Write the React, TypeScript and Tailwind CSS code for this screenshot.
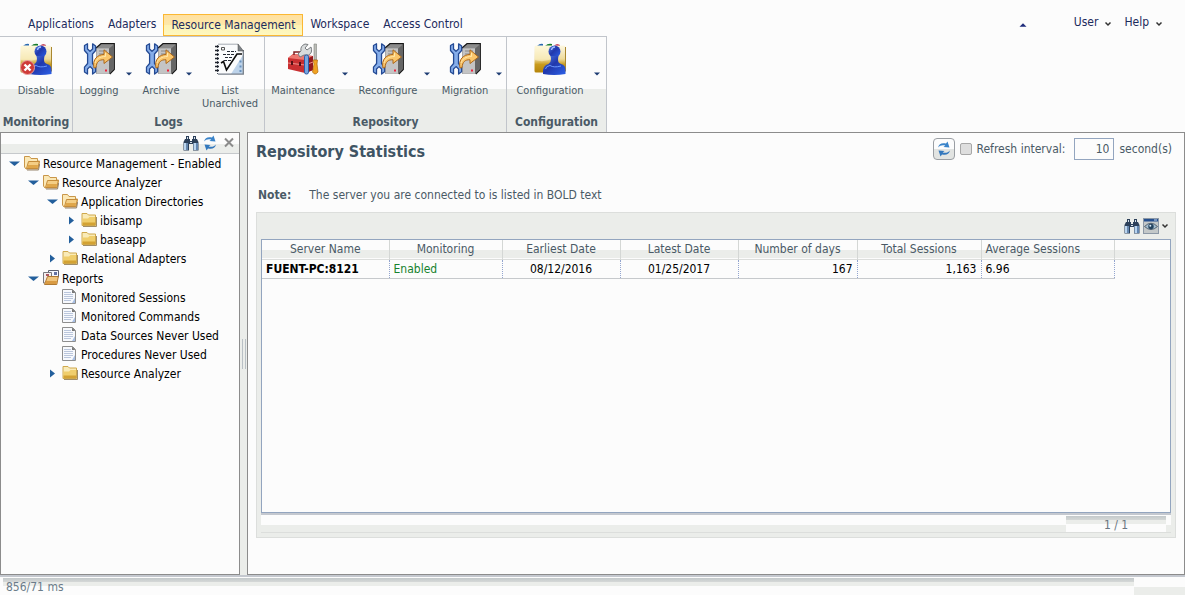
import type { ReactNode } from "react";

type IconProps = { className?: string };

function Wrench() {
  return (
    <path
      d="M1.5 2.5L4.5 0.8V6L7 8.2L9.6 6V0.8L12.6 3V7.5L9.5 11V20.5L12.6 24V28.8L9.6 31V26L7 23.6L4.5 26V31L1.5 29V24.2L4.6 20.5V11L1.5 7.5Z"
      fill="#86aeea"
      stroke="#244a94"
      strokeWidth="1.3"
      strokeLinejoin="round"
    />
  );
}

function ServerIcon({ className }: IconProps) {
  return (
    <svg className={className} viewBox="0 0 32 32">
      <path d="M13 5L18 .8H31.2V26.5L26.5 31H13Z" fill="#a9a9a9" />
      <path d="M13.5 5.5L18 1.5H30L26 5.5Z" fill="#8b8b8b" />
      <path d="M14 5.5H26V30.5H14Z" fill="#c4c4c4" />
      <path d="M26 5.5L30.5 1.5V26L26 30.5Z" fill="#666" />
      <path d="M16 8H24M16 11H24" stroke="#888" />
      <path d="M13 5L18 .7H31.3V26.5L26.8 31" fill="none" stroke="#171717" strokeWidth="1.2" />
      <Wrench />
      <path
        d="M11 25C9 16 15 11.5 21 11.5V6.8L29.5 14L21 20.5V16.8C16 16.5 13.5 19 13 24.5Z"
        fill="#fac66b"
        stroke="#ad681b"
        strokeLinejoin="round"
      />
      <path d="M12 20C13 16 17 13.5 22.5 13.5V10" fill="none" stroke="#ffe8ab" />
      <path d="M22 26.5H24V28.5H22Z" fill="#f0203c" />
    </svg>
  );
}

function UserFolderIcon({ className }: IconProps) {
  return (
    <svg className={className} viewBox="0 0 32 32">
      <defs>
        <linearGradient id="folder-gold" x1="0" y1="0" x2="0" y2="1">
          <stop offset="0" stopColor="#fdf8e4" />
          <stop offset=".5" stopColor="#eedb9c" />
          <stop offset=".7" stopColor="#c99b1e" />
          <stop offset="1" stopColor="#b58409" />
        </linearGradient>
        <linearGradient id="user-blue" x1="0" y1="0" x2="1" y2="1">
          <stop offset="0" stopColor="#4f7ce8" />
          <stop offset=".45" stopColor="#2138ac" />
          <stop offset="1" stopColor="#2c61e8" />
        </linearGradient>
      </defs>
      <path d="M3 3Q6 0 9 1V3Z" fill="#2969b0" />
      <path d="M11 3Q14 0 18 1V3Z" fill="#177b2b" />
      <path d="M20 3Q22 0 26 2V3Z" fill="#b30d2f" />
      <rect x=".5" y="2.5" width="31" height="27" rx="1.5" fill="url(#folder-gold)" />
      <path d="M1 17Q10 20 20 15V3Q28 3 31 4V3H1Z" fill="#fff7d2" opacity=".5" />
      <path d="M31.5 4V28H24" fill="none" stroke="#a9872f" />
      <circle cx="20.5" cy="8.5" r="6" fill="url(#user-blue)" />
      <path
        d="M16.5 13H24.5C23.5 18 24 20 27 21Q31.5 22 31.5 27V31Q20 33 9 31V27Q10 22 14.5 21Q18 19 16.5 13Z"
        fill="url(#user-blue)"
      />
      <path d="M17.5 7Q18 4 21 4" fill="none" stroke="#a6c1ff" strokeWidth="1.3" />
      <path d="M11.5 26Q12 23 16 22.5Q20 25 27 23" fill="none" stroke="#6b98ff" />
    </svg>
  );
}

function DisableIcon({ className }: IconProps) {
  return (
    <span className="relative block">
      <UserFolderIcon className={className} />
      <svg className="absolute bottom-0 left-0 size-4" viewBox="0 0 16 16">
        <circle cx="7.5" cy="8.5" r="7" fill="#cf3b38" stroke="#e9a09c" />
        <path d="M4.5 5.5L10.5 11.5M10.5 5.5L4.5 11.5" stroke="#fff" strokeWidth="2.4" />
      </svg>
    </span>
  );
}

function NotebookIcon({ className }: IconProps) {
  return (
    <svg className={className} viewBox="0 0 32 32">
      <path d="M4 1.5H24L29 7V31H4Z" fill="#fafbfc" />
      <path d="M17 31L29 12V31Z" fill="#bdd3ea" />
      <path d="M4 31.2H29.3V7" fill="none" stroke="#777f89" strokeWidth="1.3" />
      <path d="M4 1.2H24" stroke="#a4aab3" />
      <path d="M24 1L29.5 8H24Z" fill="#7c8187" stroke="#444" strokeWidth=".5" />
      <path d="M3.5 2V31" stroke="#4d5561" strokeDasharray="1 1" />
      <path d="M1 3.5H5M1 7.5H5M1 11.5H5M1 15.5H5M1 19.5H5M1 23.5H5M1 27.5H5" stroke="#20242d" strokeWidth="1.6" />
      <path d="M7.5 4.5H10.5V7H7.5Z" fill="none" stroke="#555" />
      <path d="M13 8.5H22M9 11.5H20M11 14.5H18M10 17.5H17" stroke="#252b35" strokeDasharray="3 1" />
      <path d="M7 20L9.5 18.5L12.5 27L23 11H28" fill="none" stroke="#0d0d0d" strokeWidth="1.6" />
      <path d="M25.5 17.5H27.5V19.5H25.5ZM25.5 22.5H27.5V24.5H25.5ZM25.5 27H27.5V29H25.5Z" fill="#6891bd" />
    </svg>
  );
}

function ToolboxIcon({ className }: IconProps) {
  return (
    <svg className={className} viewBox="0 0 32 32">
      <path d="M1 15L6 11L26 13V27L18 30L1 26Z" fill="#c92f31" />
      <path d="M1 15L6 11L26 13L18 17Z" fill="#ed7770" />
      <path d="M18 17L26 13V27L18 30.5Z" fill="#94191f" />
      <path d="M1 20L18 22L26 19" fill="none" stroke="#f0918b" />
      <path d="M4 18H6V22H4ZM12 19H14V23H12Z" fill="#551216" />
      <path d="M7 12V9H14V12" fill="none" stroke="#7e2023" strokeWidth="1.5" />
      <path
        d="M11 11L14 8Q13 3 18 1L21 1.5L18 5L20 7L24 4Q26 10 21.5 12L17 12L13 14Z"
        fill="#d8dbdc"
        stroke="#797d80"
      />
      <rect x="17.5" y="12" width="4" height="19" rx="1.8" fill="#78a6df" stroke="#2b5da9" />
      <path d="M27 1H29.5V17H27Z" fill="#bbbcb7" stroke="#81837e" strokeWidth=".6" />
      <path d="M26 17H30.5L30 21L31 29Q28 33 25.5 29L27 21Z" fill="#f1a321" stroke="#af6b10" strokeWidth=".7" />
    </svg>
  );
}

function BinocularsIcon({ className }: IconProps) {
  return (
    <svg className={className} viewBox="0 0 16 16">
      <path d="M3 1H6V4H7V6H9V4H10V1H13V4H14L15.5 7V15.5H10V9H6V15.5H.5V7L2 4H3Z" fill="#2c405a" />
      <path d="M1 8H3.5V15H1ZM10.5 8H13V15H10.5Z" fill="#b9d4ef" />
      <path d="M3.5 8H5V15H3.5ZM13 8H15V15H13Z" fill="#6286b1" />
      <path d="M4 2H5V4H4ZM11 2H12V4H11ZM7 7H9V8H7Z" fill="#d8e2ec" />
    </svg>
  );
}

function RefreshIcon({ className }: IconProps) {
  return (
    <svg className={className} viewBox="0 0 16 16">
      <path d="M2 6.5C3 2.5 6 1.5 10 2.5L11.5 .5L13.5 6.5L7.5 6L9.3 4.5C6 3.6 4 4.5 2 6.5Z" fill="#3983c9" />
      <path d="M14 9.5C13 13.5 10 14.5 6 13.5L4.5 15.5L2.5 9.5L8.5 10L6.7 11.5C10 12.4 12 11.5 14 9.5Z" fill="#3378bd" />
    </svg>
  );
}

function EyeIcon({ className }: IconProps) {
  return (
    <svg className={className} viewBox="0 0 16 16">
      <rect x=".5" y=".5" width="15" height="15" fill="#c3c8c9" stroke="#8c98a6" />
      <path d="M1 1H15V3.5H1Z" fill="#254f8e" />
      <path d="M11 1.5H14V2.5H11Z" fill="#c6d8ef" />
      <path d="M1.5 8.5Q8 2 14.5 8.5Q8 14.5 1.5 8.5Z" fill="#a3bed1" stroke="#56636f" />
      <circle cx="8" cy="8.5" r="2.7" fill="#24445f" />
      <circle cx="7.3" cy="7.8" r="1" fill="#dcebf7" />
    </svg>
  );
}

function FolderIcon({ className }: IconProps) {
  return (
    <svg className={className} viewBox="0 0 16 16">
      <path d="M1 1.5H6L7.5 3H14.5V13.5H1Z" fill="#f9ebb8" stroke="#cfa84c" />
      <path d="M1.5 6.5H7L8.5 5H14V13H1.5Z" fill="#f0ce6c" />
      <path d="M1.5 10.5H14V13H1.5Z" fill="#d3a233" />
      <path d="M2 14.5H15.5V5" fill="none" stroke="#a08d68" />
    </svg>
  );
}

function OpenFolderIcon({ className }: IconProps) {
  return (
    <svg className={className} viewBox="0 0 16 16">
      <path d="M.5 1.5H5.5L7 3.5H13.5V6H15.5L14 14H2L.5 12Z" fill="#fbe8b6" stroke="#c9974a" />
      <path d="M4.5 6.5H15.3L13.8 13.5H2.5Z" fill="#f4ce85" stroke="#c58c3b" />
      <path d="M4 10H14L13.5 13H3.2Z" fill="#dfa64a" />
      <path d="M3 15H14.5L15.7 9" fill="none" stroke="#95836d" />
    </svg>
  );
}

function ReportsIcon({ className }: IconProps) {
  return (
    <svg className={className} viewBox="0 0 16 16">
      <path d="M5.5.5H15.5V7H5.5Z" fill="#f4f8ff" stroke="#5c6070" />
      <path d="M11 2H14V5H11Z" fill="#6372a3" />
      <path d="M.5 2.5H8.5V13H.5Z" fill="#f5eeee" stroke="#77787e" />
      <path d="M3 4H6V6H3Z" fill="#ad5761" />
      <path d="M4.5 6.5H15.3L13.8 14.5H1.5Z" fill="#f0c57d" stroke="#b07a33" />
      <path d="M3 11H14L13.5 14H2.2Z" fill="#d99b43" />
    </svg>
  );
}

function DocumentIcon({ className }: IconProps) {
  return (
    <svg className={className} viewBox="0 0 16 16">
      <path d="M.5.5H10.5L13.5 3.5V14.5H.5Z" fill="#f7f9fd" stroke="#8e8e8e" />
      <path d="M2 3.5H9M2 5.5H11M2 7.5H11M2 9.5H11M2 11.5H9" stroke="#bac6dc" />
      <path d="M10 .5L13.5 4H10Z" fill="#777" />
      <path d="M10 14L13 9V14Z" fill="#a8bfe3" />
    </svg>
  );
}

function CaretDown({ className }: IconProps) {
  return (
    <svg className={className} viewBox="0 0 8 8">
      <path d="M1 2.5H7L4 5.5Z" fill="#1d3c72" />
    </svg>
  );
}

function Chevron({ className }: IconProps) {
  return (
    <svg className={className} viewBox="0 0 8 8">
      <path d="M1.5 2.5L4 5L6.5 2.5" fill="none" stroke="#333" strokeWidth="1.5" />
    </svg>
  );
}

const tabs = ["Applications", "Adapters", "Resource Management", "Workspace", "Access Control"];

type Tool = { label: string; icon: (props: IconProps) => ReactNode; width: string; menu: boolean };

const groups: { title: string; width: string; tools: Tool[] }[] = [
  {
    title: "Monitoring",
    width: "w-[73px]",
    tools: [{ label: "Disable", icon: DisableIcon, width: "w-[72px]", menu: false }],
  },
  {
    title: "Logs",
    width: "w-48",
    tools: [
      { label: "Logging", icon: ServerIcon, width: "w-[52px]", menu: true },
      { label: "Archive", icon: ServerIcon, width: "w-12", menu: true },
      { label: "List Unarchived", icon: NotebookIcon, width: "w-[66px]", menu: false },
    ],
  },
  {
    title: "Repository",
    width: "w-[242px]",
    tools: [
      { label: "Maintenance", icon: ToolboxIcon, width: "w-[76px]", menu: true },
      { label: "Reconfigure", icon: ServerIcon, width: "w-[70px]", menu: true },
      { label: "Migration", icon: ServerIcon, width: "w-[60px]", menu: true },
    ],
  },
  {
    title: "Configuration",
    width: "w-[100px]",
    tools: [{ label: "Configuration", icon: UserFolderIcon, width: "w-[86px]", menu: true }],
  },
];

type TreeNode = {
  label: string;
  indent: string;
  state: "open" | "closed" | "leaf";
  icon: (props: IconProps) => ReactNode;
};

const tree: TreeNode[] = [
  { label: "Resource Management - Enabled", indent: "pl-2", state: "open", icon: OpenFolderIcon },
  { label: "Resource Analyzer", indent: "pl-[27px]", state: "open", icon: OpenFolderIcon },
  { label: "Application Directories", indent: "pl-[46px]", state: "open", icon: OpenFolderIcon },
  { label: "ibisamp", indent: "pl-[65px]", state: "closed", icon: FolderIcon },
  { label: "baseapp", indent: "pl-[65px]", state: "closed", icon: FolderIcon },
  { label: "Relational Adapters", indent: "pl-[46px]", state: "closed", icon: FolderIcon },
  { label: "Reports", indent: "pl-[27px] pt-px", state: "open", icon: ReportsIcon },
  { label: "Monitored Sessions", indent: "pl-[46px]", state: "leaf", icon: DocumentIcon },
  { label: "Monitored Commands", indent: "pl-[46px]", state: "leaf", icon: DocumentIcon },
  { label: "Data Sources Never Used", indent: "pl-[46px]", state: "leaf", icon: DocumentIcon },
  { label: "Procedures Never Used", indent: "pl-[46px]", state: "leaf", icon: DocumentIcon },
  { label: "Resource Analyzer", indent: "pl-[46px]", state: "closed", icon: FolderIcon },
];

const columns = [
  { title: "Server Name", value: "FUENT-PC:8121", width: "w-[127px]", head: "text-center", cell: "text-left font-bold" },
  { title: "Monitoring", value: "Enabled", width: "w-[113px]", head: "text-center", cell: "text-left text-[#16822d]" },
  { title: "Earliest Date", value: "08/12/2016", width: "w-[118px]", head: "text-center", cell: "text-center" },
  { title: "Latest Date", value: "01/25/2017", width: "w-[118px]", head: "text-center", cell: "text-center" },
  { title: "Number of days", value: "167", width: "w-[119px]", head: "text-center", cell: "text-right" },
  { title: "Total Sessions", value: "1,163", width: "w-[124px]", head: "text-center", cell: "text-right" },
  { title: "Average Sessions", value: "6.96", width: "w-[133px]", head: "text-left", cell: "text-left" },
];

function MenuBar() {
  return (
    <header className="flex h-9 items-start justify-between pt-3.5 pr-[22px] pl-[21px] text-[#1c2b5c]">
      <nav className="flex h-[22px]">
        {tabs.map((tab) => (
          <button
            key={tab}
            className={
              tab === "Resource Management"
                ? "border border-[#fbb833] bg-[linear-gradient(#ffe0a0_0%,#fde8a9_50%,#fdf3b4_50%,#fef8c0_100%)] px-[7px]"
                : "px-[7px] pb-0.5"
            }
          >
            {tab}
          </button>
        ))}
      </nav>
      <div className="flex items-center">
        <button aria-label="Collapse ribbon" className="mt-1.5 mr-[47px]">
          <svg className="size-2" viewBox="0 0 8 8">
            <path d="M.5 5.8L4 2.2L7.5 5.8Z" fill="#1f2c7c" />
          </svg>
        </button>
        <button className="mr-3 flex items-center gap-1.5">
          User <Chevron className="mt-1 size-2" />
        </button>
        <button className="flex items-center gap-1.5">
          Help <Chevron className="mt-1 size-2" />
        </button>
      </div>
    </header>
  );
}

function Ribbon() {
  return (
    <div className="flex h-24 text-[#4a5a66]">
      {groups.map((group) => (
        <section
          key={group.title}
          className={`${group.width} flex flex-col border-t border-r border-[#c1c5cb] bg-[linear-gradient(#fcfcfc_52px,#ebedea_52px)]`}
        >
          <div className="flex flex-1 gap-1 pt-1.5">
            {group.tools.map((tool) => (
              <div key={tool.label} className="flex shrink-0">
                <button className={`${tool.width} flex flex-col items-center text-[11px] leading-[13px]`}>
                  <tool.icon className="size-8" />
                  <span className="mt-[9px] text-center">{tool.label}</span>
                </button>
                {tool.menu && (
                  <button aria-label={`${tool.label} menu`} className="h-9 pt-[26px]">
                    <CaretDown className="size-2" />
                  </button>
                )}
              </div>
            ))}
          </div>
          <h2 className="pb-0.5 text-center font-bold">{group.title}</h2>
        </section>
      ))}
    </div>
  );
}

function Sidebar() {
  return (
    <aside className="w-60 shrink-0 border border-[#8c8c8c] bg-[#fcfcfc]">
      <div className="flex h-[21px] items-center justify-end gap-[3px] border-b border-[#c6c9cc] bg-[linear-gradient(#fcfcfc_11px,#ebedea_11px)] pr-0.5">
        <button aria-label="Find">
          <BinocularsIcon className="size-4" />
        </button>
        <button aria-label="Refresh">
          <RefreshIcon className="size-4" />
        </button>
        <button aria-label="Close">
          <svg className="size-4" viewBox="0 0 16 16">
            <path d="M4 3.5L12 11.5M12 3.5L4 11.5" stroke="#8b8b8b" strokeWidth="2" />
          </svg>
        </button>
      </div>
      <ul>
        {tree.map((node, i) => (
          <li key={i} className={`${node.indent} flex items-center whitespace-nowrap text-black`}>
            <svg className="mr-1 size-[11px]" viewBox="0 0 11 11">
              {node.state === "open" && <path d="M0 3.5H11L5.5 8Z" fill="#235f9c" />}
              {node.state === "closed" && <path d="M3 1.5L8 5.5L3 9.5Z" fill="#235f9c" />}
            </svg>
            <node.icon className="mr-[3px] mb-px size-4" />
            <span className="pt-px leading-[18px]">{node.label}</span>
          </li>
        ))}
      </ul>
    </aside>
  );
}

function StatsTable() {
  return (
    <div className="flex flex-1 flex-col border border-[#dcdedc] bg-[#ebedea] px-1 pb-1">
      <div className="flex h-[26px] items-center justify-end pr-0.5">
        <button aria-label="Find in table">
          <BinocularsIcon className="size-4" />
        </button>
        <button aria-label="View options" className="ml-[3px] flex items-center">
          <EyeIcon className="size-4" />
          <Chevron className="ml-0.5 size-2" />
        </button>
      </div>
      <div className="flex-1 border border-[#93a5bf] bg-[#fcfcfc]">
        <table className="w-full table-fixed border-collapse">
          <thead className="text-[#4a5a66]">
            <tr className="h-[19px] border-b border-[#dcdedc] bg-[linear-gradient(#fcfcfc_10px,#ebedea_10px)]">
              {columns.map((col) => (
                <th key={col.title} className={`${col.width} ${col.head} border-r border-[#d4d7d5] px-1 pt-px pb-0 leading-[17px] font-normal`}>
                  {col.title}
                </th>
              ))}
              <td />
            </tr>
          </thead>
          <tbody className="text-black">
            <tr className="h-[19px]">
              {columns.map((col) => (
                <td
                  key={col.title}
                  className={`${col.cell} border-r border-b border-r-[#93a5cf] border-b-[#c6c9cc] px-1 py-0 leading-[18px] [border-right-style:dotted]`}
                >
                  {col.value}
                </td>
              ))}
              <td />
            </tr>
          </tbody>
        </table>
      </div>
      <footer className="flex h-5 justify-end border-t-2 border-b border-t-[#c4c8cf] border-b-[#dcdedc] bg-[linear-gradient(#fcfcfc_10px,#ebedea_10px)] pr-[5px]">
        <div className="w-[100px] bg-[linear-gradient(#fcfcfc_1px,#c3c9cb_1px,#d5d8d7_5px,#ebedea_5px,#ebedea_9px,#fcfcfc_9px)] text-center leading-5 text-[#6b7680]">
          1 / 1
        </div>
      </footer>
    </div>
  );
}

function Content() {
  return (
    <main className="flex min-w-0 flex-1 flex-col border border-[#8c8c8c] bg-[#fcfcfc] px-2 pb-9 text-[#4a5a66]">
      <div className="flex items-start justify-between pt-[5px] pr-1">
        <h1 className="text-base leading-7 font-bold text-[#3f5464]">Repository Statistics</h1>
        <div className="flex items-center">
          <button
            aria-label="Refresh now"
            className="flex size-[22px] items-center justify-center rounded-sm border border-[#9a9ea3] bg-[linear-gradient(#fcfcfc_50%,#e2e4e2_50%)]"
          >
            <RefreshIcon className="size-4" />
          </button>
          <input
            id="auto-refresh"
            type="checkbox"
            className="mx-[5px] size-3 appearance-none rounded-xs border border-[#a7a7a7] bg-[#dedede]"
          />
          <label htmlFor="auto-refresh">Refresh interval:</label>
          <input
            aria-label="Refresh interval in seconds"
            defaultValue="10"
            className="mr-[5px] ml-[9px] h-[22px] w-10 border border-[#93a5bf] bg-[#fcfcfc] px-1 text-right"
          />
          <span>second(s)</span>
        </div>
      </div>
      <p className="flex gap-[18px] px-0.5 pt-[21px] pb-[9px]">
        <b>Note:</b>
        <span>The server you are connected to is listed in BOLD text</span>
      </p>
      <StatsTable />
    </main>
  );
}

export default function App() {
  return (
    <div className="flex min-h-screen flex-col bg-[#fcfcfc] font-['DejaVu_Sans_Condensed','Open_Sans','Noto_Sans',sans-serif] text-xs">
      <MenuBar />
      <Ribbon />
      <div className="flex flex-1 bg-[#ebedea]">
        <Sidebar />
        <div className="flex w-[7px] shrink-0 items-center justify-center gap-0.5">
          <span className="h-[30px] w-px bg-[#b9c0c5]" />
          <span className="h-[30px] w-px bg-[#b9c0c5]" />
        </div>
        <Content />
      </div>
      <footer className="flex h-5 items-stretch border-t-2 border-[#c4c8cf]">
        <div className="ml-[3px] flex-1 bg-[linear-gradient(#fcfcfc_1px,#c3c9cb_1px,#d5d8d7_5px,#ebedea_5px,#ebedea_9px,#fcfcfc_9px)] pl-[3px] leading-5 text-[#6b7c8a]">
          856/71 ms
        </div>
        <div className="w-[51px] bg-[linear-gradient(#fcfcfc_10px,#ebedea_10px)]" />
      </footer>
    </div>
  );
}
